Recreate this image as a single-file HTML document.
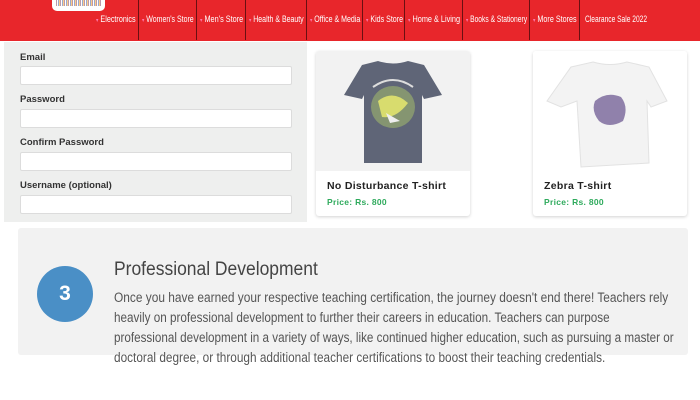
<!DOCTYPE html>
<html><head><meta charset="utf-8"><style>
*{margin:0;padding:0;box-sizing:border-box}
body{width:700px;height:400px;background:#fff;position:relative;overflow:hidden;font-family:"Liberation Sans",sans-serif}
.hdr{position:absolute;left:0;top:0;width:700px;height:41px;background:#e8262b}
.logo{position:absolute;left:52px;top:-4px;width:53px;height:15px;background:#fff;border-radius:0 0 5px 5px}
.logo i{position:absolute;left:4px;top:4px;width:45px;height:6px;background:repeating-linear-gradient(90deg,#b9a 0 1px,#fff 1px 2px,#9ac 2px 3px,#fc8 3px 4px)}
.nv{position:absolute;top:0;height:40px;border-right:1px solid #6a1012;overflow:hidden}
.nv span{position:absolute;left:3px;top:14px;font-size:9px;color:#fff;white-space:nowrap;transform-origin:0 0;transform:scaleX(.8)}
.nv b{font-weight:normal;color:#f7a;font-size:6px}
.form{position:absolute;left:4px;top:42px;width:303px;height:180px;background:#eeefee}
.form label{position:absolute;left:16px;font-size:9.5px;font-weight:bold;color:#333}
.form .in{position:absolute;left:16px;width:272px;height:19px;background:#fff;border:1px solid #dcdcdc;border-radius:2px}
.card{position:absolute;top:51px;width:154px;height:165px;background:#fff;border-radius:3px;box-shadow:0 1px 3px rgba(0,0,0,.18)}
.card .img{position:absolute;left:0;top:0;width:154px;height:120px;background:#f2f2f2;border-radius:3px 3px 0 0}
.card h4{position:absolute;left:11px;top:129px;font-size:10.5px;font-weight:bold;color:#222;letter-spacing:.3px}
.card p{position:absolute;left:11px;top:146px;font-size:8.5px;font-weight:bold;color:#2eaa5c;letter-spacing:.3px}
.sec{position:absolute;left:18px;top:228px;width:670px;height:127px;background:#f2f2f2;border-radius:3px}
.circ{position:absolute;left:37px;top:266px;width:56px;height:56px;border-radius:50%;background:#4a8fc6;color:#fff;font-weight:bold;font-size:21px;text-align:center;line-height:56px}
.ln{position:absolute;left:114px;white-space:nowrap;transform-origin:0 0;color:#555;font-size:13.5px;transform:scaleX(.86)}
.fit{display:inline-block}
</style></head><body>
<div class="hdr"></div>
<div class="logo"><i></i></div>
<div class="nv" style="left:93px;width:46px"><span class="fit" style="width:40px"><b>▾</b> Electronics</span></div>
<div class="nv" style="left:139px;width:58px"><span class="fit" style="width:52px"><b>▾</b> Women's Store</span></div>
<div class="nv" style="left:197px;width:49px"><span class="fit" style="width:43px"><b>▾</b> Men's Store</span></div>
<div class="nv" style="left:246px;width:61px"><span class="fit" style="width:55px"><b>▾</b> Health &amp; Beauty</span></div>
<div class="nv" style="left:307px;width:56px"><span class="fit" style="width:50px"><b>▾</b> Office &amp; Media</span></div>
<div class="nv" style="left:363px;width:42px"><span class="fit" style="width:37px"><b>▾</b> Kids Store</span></div>
<div class="nv" style="left:405px;width:58px"><span class="fit" style="width:52px"><b>▾</b> Home &amp; Living</span></div>
<div class="nv" style="left:463px;width:67px"><span class="fit" style="width:61px"><b>▾</b> Books &amp; Stationery</span></div>
<div class="nv" style="left:530px;width:50px"><span class="fit" style="width:44px"><b>▾</b> More Stores</span></div>
<div class="nv" style="left:580px;width:70px;border-right:0"><span class="fit" style="width:62px;left:5px">Clearance Sale 2022</span></div>
<div class="form">
<label style="top:10px">Email</label><div class="in" style="top:24px"></div>
<label style="top:52px">Password</label><div class="in" style="top:67px"></div>
<label style="top:95px">Confirm Password</label><div class="in" style="top:110px"></div>
<label style="top:138px">Username (optional)</label><div class="in" style="top:153px"></div>
</div>
<div class="card" style="left:316px"><div class="img">
<svg width="154" height="120" viewBox="0 0 154 120"><path d="M46 14 L62 10 Q77 15 92 10 L108 14 L126 44 L108 48 L106 44 L106 112 L48 112 L48 44 L46 48 L28 44 Z" fill="#5f6577"/><ellipse cx="77" cy="56" rx="22" ry="21" fill="#8a9a70" opacity=".9"/><path d="M62 50 Q77 38 92 52 Q80 68 66 66Z" fill="#d8dc6e"/><path d="M70 62 L84 70 L74 72Z" fill="#eee"/><path d="M57 36 Q77 22 97 36" fill="none" stroke="#ddd" stroke-width="2"/></svg>
</div><h4>No Disturbance T-shirt</h4><p>Price: Rs. 800</p></div>
<div class="card" style="left:533px"><div class="img" style="background:#fff">
<svg width="154" height="120" viewBox="0 0 154 120"><path d="M38 16 L60 11 Q77 16 94 11 L116 16 L134 50 L118 56 L114 50 L116 112 L48 116 L44 50 L28 56 L14 50 Z" fill="#f3f3f3" stroke="#e2e2e2"/><path d="M62 50 Q74 40 88 46 Q96 56 90 70 Q76 78 66 70 Q58 60 62 50Z" fill="#7e6c9e" opacity=".85"/></svg>
</div><h4>Zebra T-shirt</h4><p>Price: Rs. 800</p></div>
<div class="sec"></div>
<div class="circ">3</div>
<div class="ln fit" style="top:259px;font-size:19px;color:#444;width:204px">Professional Development</div>
<div class="ln fit" style="top:290px;width:554px">Once you have earned your respective teaching certification, the journey doesn't end there! Teachers rely</div>
<div class="ln fit" style="top:310px;width:496px">heavily on professional development to further their careers in education. Teachers can purpose</div>
<div class="ln fit" style="top:330px;width:560px">professional development in a variety of ways, like continued higher education, such as pursuing a master or</div>
<div class="ln fit" style="top:350px;width:491px">doctoral degree, or through additional teacher certifications to boost their teaching credentials.</div>
<script>
document.querySelectorAll('.fit').forEach(function(e){
 var t=parseFloat(e.style.width);e.style.width='auto';
 var w=e.scrollWidth; if(w>0) e.style.transform='scaleX('+(t/w)+')';
});
</script>
</body></html>
